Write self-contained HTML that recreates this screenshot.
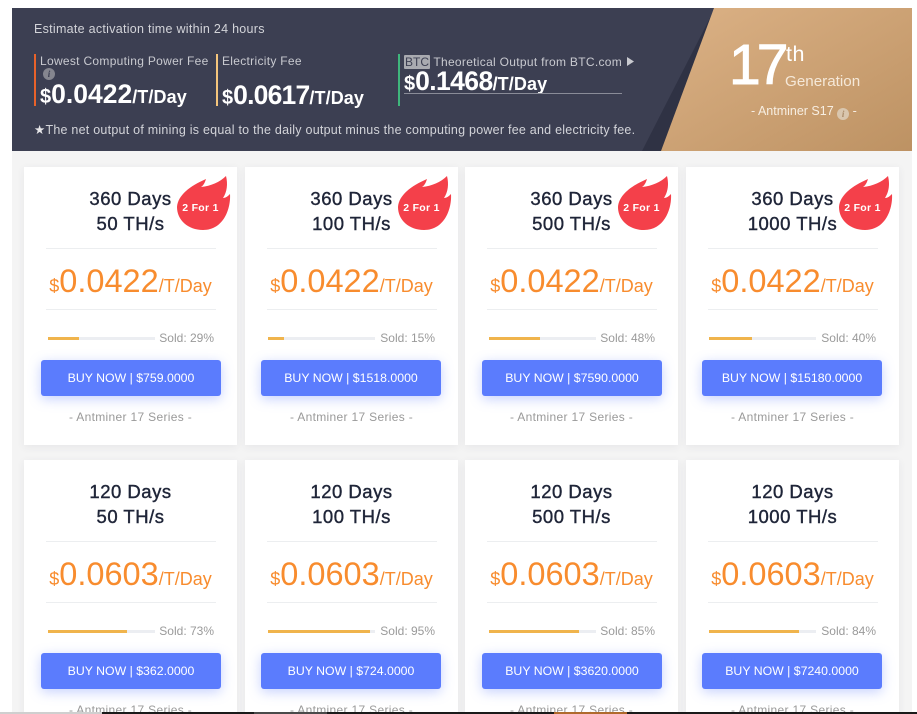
<!DOCTYPE html>
<html><head><meta charset="utf-8">
<style>
html,body{margin:0;padding:0;width:917px;height:714px;overflow:hidden;background:#fff;font-family:"Liberation Sans",Arial,sans-serif}
#root{position:absolute;left:0;top:0;width:917px;height:714px;overflow:hidden;background:#fff}
.a{position:absolute;white-space:nowrap}
#pg{position:absolute;left:12px;top:8px;width:900px;height:706px;background:#f4f4f4}
#ban{position:absolute;left:12px;top:8px;width:900px;height:143px;background:#3c3f52;overflow:hidden}
.lbl{font-size:12px;color:#c9cad0;line-height:14px;letter-spacing:.3px}
.big{color:#fff;font-weight:bold;font-size:26.5px;line-height:28px}
.big s{text-decoration:none;font-size:20px;letter-spacing:0}
.big i{font-style:normal;font-size:18px;letter-spacing:.1px}
.card{position:absolute;width:213px;height:278px;background:#fff;box-shadow:0 2px 8px rgba(60,60,80,.07)}
.t{position:absolute;left:0;top:19px;width:213px;text-align:center;font-size:18.5px;letter-spacing:.5px;line-height:25px;color:#1f2538;-webkit-text-stroke:.4px #1f2538}
.hr{position:absolute;left:22px;width:170px;height:1px;background:#eceef0}
.p{position:absolute;left:0;width:213px;top:94px;text-align:center;color:#f88c2e;font-size:32.5px;line-height:40px;white-space:nowrap}
.p s{text-decoration:none;font-size:18px}
.p i{font-style:normal;font-size:18px}
.bar{position:absolute;left:24px;top:170px;width:107px;height:3px;background:#eceef2}
.bar b{display:block;height:3px;background:#f0b44c}
.sold{position:absolute;top:164px;right:23px;font-size:12px;line-height:15px;color:#9a9a9a;white-space:nowrap}
.btn{position:absolute;left:17px;top:193px;width:180px;height:36px;background:#5b7cfd;border-radius:3px;box-shadow:0 3px 12px rgba(91,124,253,.35);color:#fff;font-size:12.3px;line-height:36px;text-align:center;white-space:nowrap}
.ser{position:absolute;left:0;width:213px;top:243px;text-align:center;font-size:12px;letter-spacing:.32px;line-height:15px;color:#999;white-space:nowrap}
.f{position:absolute;left:153px;top:9px;width:54px;height:55px}
.f span{position:absolute;left:0;top:25px;width:47px;text-align:center;color:#fff;font-size:10.5px;letter-spacing:.3px;font-weight:bold;line-height:14px;white-space:nowrap}
</style></head><body>
<div id="root">
<div id="pg"></div>
<div id="ban">
<svg class="a" style="left:0;top:0" width="900" height="143">
<defs><linearGradient id="g" x1="0" y1="0" x2="1" y2="1"><stop offset="0" stop-color="#dcb286"/><stop offset="1" stop-color="#bd9263"/></linearGradient></defs>
<polygon points="703,0 630,143 649,143 710,0" fill="#2f3244"/>
<polygon points="702,0 900,0 900,143 649,143" fill="url(#g)"/>
</svg>
<div class="a" style="left:22px;top:14px;font-size:12.5px;letter-spacing:.28px;line-height:14px;color:#d3d4d9">Estimate activation time within 24 hours</div>
<div class="a" style="left:22px;top:46px;width:2px;height:52px;background:#e8622a"></div>
<div class="a lbl" style="left:28px;top:46px">Lowest Computing Power Fee</div>
<div class="a" style="left:31px;top:60px;width:12px;height:12px;border-radius:50%;background:#85868f;color:#3c3f52;font:italic bold 9px/12px 'Liberation Serif',serif;text-align:center">i</div>
<div class="a big" style="left:28px;top:72px"><s>$</s>0.0422<i>/T/Day</i></div>
<div class="a" style="left:204px;top:46px;width:2px;height:52px;background:#f5c57c"></div>
<div class="a lbl" style="left:210px;top:46px">Electricity Fee</div>
<div class="a big" style="left:210px;top:73px;letter-spacing:-.8px"><s>$</s>0.0617<i>/T/Day</i></div>
<div class="a" style="left:386px;top:46px;width:2px;height:52px;background:#3fb67c"></div>
<div class="a lbl" style="left:392px;top:47px;letter-spacing:0"><span style="background:#a9aab0;color:#3c3f52;padding:0 1px;border-radius:1px">BTC</span> <span style="letter-spacing:.3px">Theoretical Output from BTC.com</span></div>
<svg class="a" style="left:615px;top:49px" width="8" height="9"><polygon points="0,0 7,4.5 0,9" fill="#c9cad0"/></svg>
<div class="a big" style="left:392px;top:59px;letter-spacing:-.6px"><s>$</s>0.1468<i>/T/Day</i></div>
<div class="a" style="left:392px;top:85px;width:218px;height:1px;background:#8a8c98"></div>
<div class="a" style="left:22px;top:115px;font-size:12.5px;letter-spacing:.24px;line-height:14px;color:#d3d4d9"><span style="color:#e8e8ea">★</span>The net output of mining is equal to the daily output minus the computing power fee and electricity fee.</div>
<div class="a" style="left:717px;top:22px;font-size:57px;line-height:70px;color:#fff;letter-spacing:-4px;-webkit-text-stroke:1px #fff">17</div>
<div class="a" style="left:774px;top:34px;font-size:21.5px;letter-spacing:.5px;line-height:24px;color:#fff">th</div>
<div class="a" style="left:773px;top:65px;font-size:15.2px;line-height:18px;color:#f5e8d8">Generation</div>
<div class="a" style="left:739px;top:95px;font-size:12.5px;line-height:16px;color:#f7eee2">- Antminer S17 <span style="display:inline-block;width:12px;height:12px;border-radius:50%;background:#d9c6ae;color:#a98a68;font:italic bold 9px/12px 'Liberation Serif',serif;text-align:center;vertical-align:-2px">i</span> -</div>
</div>

<!-- row 1 -->
<div class="card" style="left:24px;top:167px">
<div class="t">360 Days<br>50 TH/s</div>
<div class="f"><svg width="54" height="55" viewBox="0 0 54 55"><path d="M0 31C1 19 13 10 29 3C28 6 27 9 24 11C34 10 43 6 49 0C51 8 50 16 46 22C49 22 51 20 53 18C54 32 47 54 26 54C11 54 0 44 0 31Z" fill="#f4404a"/></svg><span>2 For 1</span></div>
<div class="hr" style="top:81px"></div>
<div class="p"><s>$</s>0.0422<i>/T/Day</i></div>
<div class="hr" style="top:142px"></div>
<div class="bar"><b style="width:31px"></b></div><div class="sold">Sold: 29%</div>
<div class="btn">BUY NOW | $759.0000</div>
<div class="ser">- Antminer 17 Series -</div>
</div>
<div class="card" style="left:245px;top:167px">
<div class="t">360 Days<br>100 TH/s</div>
<div class="f"><svg width="54" height="55" viewBox="0 0 54 55"><path d="M0 31C1 19 13 10 29 3C28 6 27 9 24 11C34 10 43 6 49 0C51 8 50 16 46 22C49 22 51 20 53 18C54 32 47 54 26 54C11 54 0 44 0 31Z" fill="#f4404a"/></svg><span>2 For 1</span></div>
<div class="hr" style="top:81px"></div>
<div class="p"><s>$</s>0.0422<i>/T/Day</i></div>
<div class="hr" style="top:142px"></div>
<div class="bar" style="left:23px"><b style="width:16px"></b></div><div class="sold">Sold: 15%</div>
<div class="btn" style="left:16px">BUY NOW | $1518.0000</div>
<div class="ser">- Antminer 17 Series -</div>
</div>
<div class="card" style="left:465px;top:167px">
<div class="t">360 Days<br>500 TH/s</div>
<div class="f"><svg width="54" height="55" viewBox="0 0 54 55"><path d="M0 31C1 19 13 10 29 3C28 6 27 9 24 11C34 10 43 6 49 0C51 8 50 16 46 22C49 22 51 20 53 18C54 32 47 54 26 54C11 54 0 44 0 31Z" fill="#f4404a"/></svg><span>2 For 1</span></div>
<div class="hr" style="top:81px"></div>
<div class="p"><s>$</s>0.0422<i>/T/Day</i></div>
<div class="hr" style="top:142px"></div>
<div class="bar"><b style="width:51px"></b></div><div class="sold">Sold: 48%</div>
<div class="btn">BUY NOW | $7590.0000</div>
<div class="ser">- Antminer 17 Series -</div>
</div>
<div class="card" style="left:686px;top:167px">
<div class="t">360 Days<br>1000 TH/s</div>
<div class="f"><svg width="54" height="55" viewBox="0 0 54 55"><path d="M0 31C1 19 13 10 29 3C28 6 27 9 24 11C34 10 43 6 49 0C51 8 50 16 46 22C49 22 51 20 53 18C54 32 47 54 26 54C11 54 0 44 0 31Z" fill="#f4404a"/></svg><span>2 For 1</span></div>
<div class="hr" style="top:81px"></div>
<div class="p"><s>$</s>0.0422<i>/T/Day</i></div>
<div class="hr" style="top:142px"></div>
<div class="bar" style="left:23px"><b style="width:43px"></b></div><div class="sold">Sold: 40%</div>
<div class="btn" style="left:16px">BUY NOW | $15180.0000</div>
<div class="ser">- Antminer 17 Series -</div>
</div>

<!-- row 2 -->
<div class="card" style="left:24px;top:460px">
<div class="t">120 Days<br>50 TH/s</div>
<div class="hr" style="top:81px"></div>
<div class="p"><s>$</s>0.0603<i>/T/Day</i></div>
<div class="hr" style="top:142px"></div>
<div class="bar"><b style="width:79px"></b></div><div class="sold">Sold: 73%</div>
<div class="btn">BUY NOW | $362.0000</div>
<div class="ser">- Antminer 17 Series -</div>
</div>
<div class="card" style="left:245px;top:460px">
<div class="t">120 Days<br>100 TH/s</div>
<div class="hr" style="top:81px"></div>
<div class="p"><s>$</s>0.0603<i>/T/Day</i></div>
<div class="hr" style="top:142px"></div>
<div class="bar" style="left:23px"><b style="width:102px"></b></div><div class="sold">Sold: 95%</div>
<div class="btn" style="left:16px">BUY NOW | $724.0000</div>
<div class="ser">- Antminer 17 Series -</div>
</div>
<div class="card" style="left:465px;top:460px">
<div class="t">120 Days<br>500 TH/s</div>
<div class="hr" style="top:81px"></div>
<div class="p"><s>$</s>0.0603<i>/T/Day</i></div>
<div class="hr" style="top:142px"></div>
<div class="bar"><b style="width:90px"></b></div><div class="sold">Sold: 85%</div>
<div class="btn">BUY NOW | $3620.0000</div>
<div class="ser">- Antminer 17 Series -</div>
</div>
<div class="card" style="left:686px;top:460px">
<div class="t">120 Days<br>1000 TH/s</div>
<div class="hr" style="top:81px"></div>
<div class="p"><s>$</s>0.0603<i>/T/Day</i></div>
<div class="hr" style="top:142px"></div>
<div class="bar" style="left:23px"><b style="width:90px"></b></div><div class="sold">Sold: 84%</div>
<div class="btn" style="left:16px">BUY NOW | $7240.0000</div>
<div class="ser">- Antminer 17 Series -</div>
</div>

<!-- bottom strip -->
<div class="a" style="left:0;top:712px;width:102px;height:2px;background:#cfcfcf"></div>
<div class="a" style="left:102px;top:712px;width:152px;height:2px;background:#1a1a1a"></div>
<div class="a" style="left:254px;top:712px;width:73px;height:2px;background:#4a4a4a"></div>
<div class="a" style="left:327px;top:712px;width:227px;height:2px;background:#1a1a1a"></div>
<div class="a" style="left:554px;top:712px;width:73px;height:2px;background:#b06a2c"></div>
<div class="a" style="left:627px;top:712px;width:290px;height:2px;background:#1a1a1a"></div>
</div>
</body></html>
